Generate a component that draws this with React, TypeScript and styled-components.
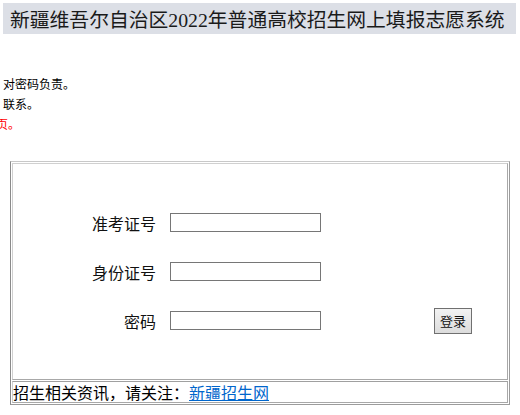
import { createGlobalStyle } from "styled-components";
import styled from "styled-components";

const GlobalStyle = createGlobalStyle`
    html, body {
        margin: 0;
        padding: 0;
        background: #ffffff;
    }
    body {
        font-family: "Liberation Sans", "Noto Sans CJK SC", sans-serif;
        font-size: 12px;
        color: #000;
    }
`;

const Page = styled.div`
    width: 520px;
    height: 415px;
    overflow: hidden;
`;

const Header = styled.div`
    margin: 3px 4px 0 3px;
    height: 31px;
    background-color: #dcdfe6;
    display: flex;
    align-items: center;
    padding-left: 7px;
`;

const Title = styled.h1`
    margin: 0;
    font-family: "Liberation Serif", "Noto Sans CJK SC", serif;
    font-size: 19.8px;
    font-weight: normal;
    color: #1a1a1a;
    white-space: nowrap;
`;

const Notice = styled.div`
    margin-top: 40px;
    padding-left: 3px;
    overflow: hidden;
`;

const NoticeLine = styled.div<{ $red?: boolean; $shift?: number }>`
    font-family: "Noto Sans CJK SC", sans-serif;
    font-size: 12px;
    line-height: 20px;
    height: 20px;
    white-space: nowrap;
    color: ${(p) => (p.$red ? "#ff0000" : "#000")};
    margin-left: ${(p) => (p.$shift ? `${p.$shift}px` : "0")};
`;

const LoginTable = styled.div`
    margin: 27px 0 0 10px;
    width: 500px;
    border: 1px solid #9c9c9c;
    border-top-color: #c8c8c8;
    border-left-color: #8a8a8a;
    padding: 1px;
    box-sizing: border-box;
`;

const FormCell = styled.div`
    border: 1px solid #a8a8a8;
    border-top-color: #d0d0d0;
    border-left-color: #d0d0d0;
    padding: 34px 0 34px 0;
    display: grid;
    grid-template-columns: 143px 151px 1fr;
    grid-auto-rows: 49px;
    column-gap: 14px;
    align-items: center;
`;

const Label = styled.label`
    font-family: "Noto Sans CJK SC", sans-serif;
    font-size: 16px;
    text-align: right;
    color: #111;
`;

const TextInput = styled.input`
    width: 151px;
    height: 19px;
    box-sizing: border-box;
    border: 1px solid #767676;
    padding: 0 2px;
    margin: 0;
    font-size: 13px;
    background: #fff;
`;

const ButtonSlot = styled.div`
    padding-left: 99px;
    display: flex;
    align-items: center;
`;

const LoginButton = styled.button`
    width: 38px;
    height: 26px;
    padding: 0;
    margin: 0;
    border: 1px solid #707070;
    background: linear-gradient(#f2f2f2, #dcdcdc);
    font-family: "Noto Sans CJK SC", sans-serif;
    font-size: 13px;
    color: #111;
    cursor: pointer;
`;

const FooterCell = styled.div`
    border: 1px solid #a8a8a8;
    border-top-color: #a0a0a0;
    border-left-color: #d0d0d0;
    margin-top: 1px;
    height: 20px;
    display: flex;
    align-items: center;
    padding-left: 0;
    font-family: "Noto Sans CJK SC", sans-serif;
    font-size: 16px;
    white-space: nowrap;
`;

const FooterLink = styled.a`
    color: #0066cc;
    text-decoration: underline;
`;

const fields = [
    { label: "准考证号", type: "text" },
    { label: "身份证号", type: "text" },
    { label: "密码", type: "password" },
];

export default function App() {
    return (
        <Page>
            <GlobalStyle />
            <Header>
                <Title>新疆维吾尔自治区2022年普通高校招生网上填报志愿系统</Title>
            </Header>
            <Notice>
                <NoticeLine>对密码负责。</NoticeLine>
                <NoticeLine>联系。</NoticeLine>
                <NoticeLine $red $shift={-7}>页。</NoticeLine>
            </Notice>
            <LoginTable>
                <FormCell>
                    {fields.map((f, i) => [
                        <Label key={f.label}>{f.label}</Label>,
                        <TextInput key={f.label + "-in"} type={f.type} />,
                        <ButtonSlot key={f.label + "-btn"}>
                            {i === fields.length - 1 && <LoginButton>登录</LoginButton>}
                        </ButtonSlot>,
                    ])}
                </FormCell>
                <FooterCell>
                    招生相关资讯，请关注：<FooterLink href="#">新疆招生网</FooterLink>
                </FooterCell>
            </LoginTable>
        </Page>
    );
}
